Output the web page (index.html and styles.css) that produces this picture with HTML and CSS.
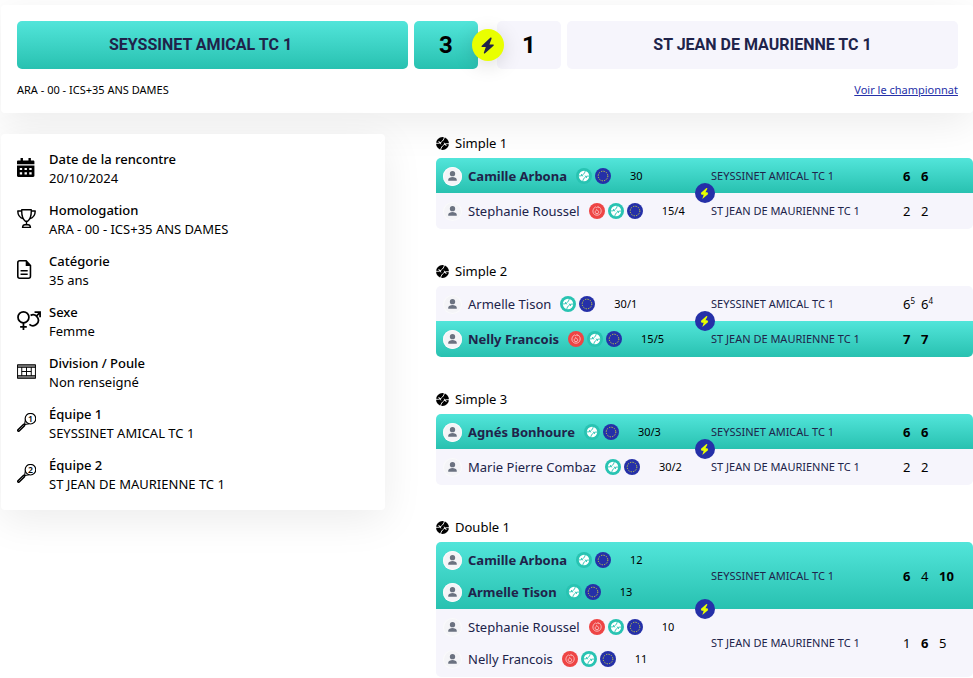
FILE: index.html
```html
<!DOCTYPE html>
<html lang="fr">
<head>
    <meta charset="UTF-8">
    <meta name="viewport" content="width=device-width, initial-scale=1.0">

    <title>Seyssinet Amical TC 1 - St Jean de Maurienne TC 1</title>
    <link rel="stylesheet" href="styles.css">
</head>
<body>
    <!-- Icônes -->
    <svg class="sprite" aria-hidden="true">
        <symbol id="bolt" viewBox="0 0 16 16">
            <path d="M10.6 0.8 2.6 8.2c-.5.5-.2 1.2.5 1.2h3.3L4.6 14.6c-.3.8.5 1.3 1.1.8l8-7.2c.5-.5.2-1.2-.5-1.2H9.8l2-5.3c.3-.9-.6-1.5-1.2-.9z"/>
        </symbol>
        <symbol id="flash" viewBox="0 0 16 16">
            <path d="M10.8 0 2.600 7.400l1.200 2.400h3L4.800 16l8.600-7.400-1.200-2.400H9.400L12.400.7z"/>
        </symbol>
        <symbol id="ball" viewBox="0 0 24 24">
            <circle cx="12" cy="12" r="12"/>
            <path class="seam" d="M0 11.500C7 13 14 8 15.500 0M8.500 24C10 16 17 11 24 12.500"/>
            <path class="seam" d="M5 7.500l4 6M15 10.500l4 6"/>
        </symbol>
        <symbol id="user" viewBox="0 0 20 20">
            <circle cx="10" cy="7" r="2.800"/>
            <path d="M5.500 14.500v-1c0-1.900 2.600-2.900 4.500-2.900s4.500 1 4.500 2.900v1z"/>
        </symbol>
        <symbol id="badge-ball" viewBox="0 0 16 16">
            <circle cx="8" cy="8" r="8" fill="#28c3b2"/>
            <circle cx="8" cy="8" r="5.200" fill="#fff"/>
            <path d="M2.800 7.800c3 .8 5.900-1.800 6.500-5.100M6.700 13.300c.6-3.300 3.500-5.900 6.500-5.100M5.200 6l1.600 2.400M9.200 7.600l1.600 2.400" fill="none" stroke="#28c3b2" stroke-width=".9"/>
        </symbol>
        <symbol id="badge-eu" viewBox="0 0 16 16">
            <circle cx="8" cy="8" r="8" fill="#2530a8"/>
            <circle cx="8" cy="8" r="4.800" fill="none" stroke="#d3da38" stroke-dasharray="1.200 1.310"/>
        </symbol>
        <symbol id="badge-fire" viewBox="0 0 16 16">
            <circle cx="8" cy="8" r="8" fill="#ee4545"/>
            <path d="M5.300 4.800 6.600 4l1 .6L9.300 3.500l.3 1.200 1.200-.2c1.100 1.300 1.700 2.900 1.200 4.700-.5 1.900-2 3-4 3s-3.600-1.200-4-3c-.4-1.700.3-3.200 1.300-4.400z" fill="none" stroke="#fbc4c4" stroke-width=".9"/>
            <path d="M6.200 9.800c-.5-1.800 1.200-1.700 1.300-3.300 1.300.8 2.300 1.800 2.200 3.300-.5 1.100-2.900 1.100-3.500 0z" fill="none" stroke="#fbc4c4" stroke-width=".9"/>
        </symbol>
        <symbol id="calendar" viewBox="0 0 24 24">
            <path fill-rule="evenodd" d="M4.500 0h3v3h7V0h3v3h3c.8 0 1.500.7 1.500 1.500V8H0V4.500C0 3.700.7 3 1.500 3h3zM0 9.500h22v13c0 .8-.7 1.500-1.500 1.500h-19C.7 24 0 23.300 0 22.500zM3.500 12.500v2.800h3v-2.800zm6 0v2.800h3v-2.800zm6 0v2.800h3v-2.800zm-12 5.500v2.800h3V18zm6 0v2.800h3V18zm6 0v2.800h3V18z"/>
        </symbol>
        <symbol id="trophy" viewBox="0 0 24 24">
            <path d="M6 1h12c.3 6-.8 11.500-4.500 14.500h-3C6.800 12.500 5.700 7 6 1zM6 2.500H1c0 5 2.500 8.500 7 10M18 2.500h5c0 5-2.500 8.500-7 10M12 15.500V20M7 23.200c.2-2.200 1.300-3.400 3-3.400h4c1.700 0 2.800 1.200 3 3.400z" fill="none" stroke="currentColor" stroke-width="1.800" stroke-linejoin="round"/>
        </symbol>
        <symbol id="file" viewBox="0 0 24 24">
            <path d="M11.500 1H3.500C2 1 1 2 1 3.500v17C1 22 2 23 3.500 23h11c1.500 0 2.500-1 2.500-2.500V7z" fill="none" stroke="currentColor" stroke-width="2"/>
            <path d="M11 1v6.500h6.500zM4.500 12.500h9v2h-9zM4.500 17h9v2h-9z"/>
        </symbol>
        <symbol id="gender" viewBox="0 0 30 24">
            <g fill="none" stroke="currentColor" stroke-width="2.200">
                <circle cx="8" cy="8" r="6.900"/>
                <path d="M8 15v9M3.800 20h8.400M17 5.500a6.800 6.800 0 1 1-1.500 11.300M24 7l4.500-5M22 1.500h7V8"/>
            </g>
        </symbol>
        <symbol id="court" viewBox="0 0 24 24">
            <path d="M0 3h24v3.500H0zM0 17.500h24V21H0z" fill="#888"/>
            <path d="M.7 3.500h22.600v17H.700zM.700 6.700h22.600M.700 17.300h22.600M6 6.500v11M12 6.500v11M18 6.500v11M6 12h12" fill="none" stroke="currentColor" stroke-width="1.200"/>
        </symbol>
        <symbol id="racket" viewBox="0 0 24 24">
            <circle cx="17" cy="7.200" r="6.700" fill="none" stroke="currentColor" stroke-width="1.500"/>
            <path d="M10.700 8.500 9.500 14.500 15.500 13.500M9.500 14.500 8 16" fill="none" stroke="currentColor" stroke-width="1.400"/>
            <path d="M8.500 15.500 2 22" fill="none" stroke="currentColor" stroke-width="4" stroke-linecap="round"/>
            <path d="M8.500 15.500 2 22" fill="none" stroke="#999" stroke-width="1"/>
        </symbol>
    </svg>

    <header class="card header">
        <div class="scoreboard">
            <h2 class="team winner">SEYSSINET AMICAL TC 1</h2>
            <div class="points">
                <div class="point winner">3</div>
                <div class="point">1</div>
                <span class="versus"><svg><use href="#bolt"/></svg></span>
            </div>
            <h2 class="team">ST JEAN DE MAURIENNE TC 1</h2>
        </div>
        <div class="header-info">
            <span>ARA - 00 - ICS+35 ANS DAMES</span>
            <a href="#">Voir le championnat</a>
        </div>
    </header>

    <main>
        <aside class="card details">
            <div class="detail">
                <svg><use href="#calendar"/></svg>
                <dl><dt>Date de la rencontre</dt><dd>20/10/2024</dd></dl>
            </div>
            <div class="detail">
                <svg><use href="#trophy"/></svg>
                <dl><dt>Homologation</dt><dd>ARA - 00 - ICS+35 ANS DAMES</dd></dl>
            </div>
            <div class="detail">
                <svg><use href="#file"/></svg>
                <dl><dt>Catégorie</dt><dd>35 ans</dd></dl>
            </div>
            <div class="detail">
                <svg class="wide"><use href="#gender"/></svg>
                <dl><dt>Sexe</dt><dd>Femme</dd></dl>
            </div>
            <div class="detail">
                <svg><use href="#court"/></svg>
                <dl><dt>Division / Poule</dt><dd>Non renseigné</dd></dl>
            </div>
            <div class="detail">
                <svg viewBox="0 0 24 24"><use href="#racket"/><text x="17" y="11">1</text></svg>
                <dl><dt>Équipe 1</dt><dd>SEYSSINET AMICAL TC 1</dd></dl>
            </div>
            <div class="detail">
                <svg viewBox="0 0 24 24"><use href="#racket"/><text x="17" y="11">2</text></svg>
                <dl><dt>Équipe 2</dt><dd>ST JEAN DE MAURIENNE TC 1</dd></dl>
            </div>
        </aside>

        <div class="matches">
            <section class="match">
                <h3><svg><use href="#ball"/></svg>Simple 1</h3>
                <div class="side winner">
                    <div class="players">
                        <div class="player">
                            <svg class="avatar"><use href="#user"/></svg>
                            <span class="name">Camille Arbona</span>
                            <span class="badges"><svg><use href="#badge-ball"/></svg><svg><use href="#badge-eu"/></svg></span>
                            <span class="rank">30</span>
                        </div>
                    </div>
                    <div class="club">SEYSSINET AMICAL TC 1</div>
                    <div class="sets"><b>6</b><b>6</b></div>
                </div>
                <div class="side">
                    <span class="versus"><svg><use href="#flash"/></svg></span>
                    <div class="players">
                        <div class="player">
                            <svg class="avatar"><use href="#user"/></svg>
                            <span class="name">Stephanie Roussel</span>
                            <span class="badges"><svg><use href="#badge-fire"/></svg><svg><use href="#badge-ball"/></svg><svg><use href="#badge-eu"/></svg></span>
                            <span class="rank">15/4</span>
                        </div>
                    </div>
                    <div class="club">ST JEAN DE MAURIENNE TC 1</div>
                    <div class="sets"><span>2</span><span>2</span></div>
                </div>
            </section>

            <section class="match">
                <h3><svg><use href="#ball"/></svg>Simple 2</h3>
                <div class="side">
                    <div class="players">
                        <div class="player">
                            <svg class="avatar"><use href="#user"/></svg>
                            <span class="name">Armelle Tison</span>
                            <span class="badges"><svg><use href="#badge-ball"/></svg><svg><use href="#badge-eu"/></svg></span>
                            <span class="rank">30/1</span>
                        </div>
                    </div>
                    <div class="club">SEYSSINET AMICAL TC 1</div>
                    <div class="sets"><span>6<sup>5</sup></span><span>6<sup>4</sup></span></div>
                </div>
                <div class="side winner">
                    <span class="versus"><svg><use href="#flash"/></svg></span>
                    <div class="players">
                        <div class="player">
                            <svg class="avatar"><use href="#user"/></svg>
                            <span class="name">Nelly Francois</span>
                            <span class="badges"><svg><use href="#badge-fire"/></svg><svg><use href="#badge-ball"/></svg><svg><use href="#badge-eu"/></svg></span>
                            <span class="rank">15/5</span>
                        </div>
                    </div>
                    <div class="club">ST JEAN DE MAURIENNE TC 1</div>
                    <div class="sets"><b>7</b><b>7</b></div>
                </div>
            </section>

            <section class="match">
                <h3><svg><use href="#ball"/></svg>Simple 3</h3>
                <div class="side winner">
                    <div class="players">
                        <div class="player">
                            <svg class="avatar"><use href="#user"/></svg>
                            <span class="name">Agnés Bonhoure</span>
                            <span class="badges"><svg><use href="#badge-ball"/></svg><svg><use href="#badge-eu"/></svg></span>
                            <span class="rank">30/3</span>
                        </div>
                    </div>
                    <div class="club">SEYSSINET AMICAL TC 1</div>
                    <div class="sets"><b>6</b><b>6</b></div>
                </div>
                <div class="side">
                    <span class="versus"><svg><use href="#flash"/></svg></span>
                    <div class="players">
                        <div class="player">
                            <svg class="avatar"><use href="#user"/></svg>
                            <span class="name">Marie Pierre Combaz</span>
                            <span class="badges"><svg><use href="#badge-ball"/></svg><svg><use href="#badge-eu"/></svg></span>
                            <span class="rank">30/2</span>
                        </div>
                    </div>
                    <div class="club">ST JEAN DE MAURIENNE TC 1</div>
                    <div class="sets"><span>2</span><span>2</span></div>
                </div>
            </section>

            <section class="match">
                <h3><svg><use href="#ball"/></svg>Double 1</h3>
                <div class="side winner">
                    <div class="players">
                        <div class="player">
                            <svg class="avatar"><use href="#user"/></svg>
                            <span class="name">Camille Arbona</span>
                            <span class="badges"><svg><use href="#badge-ball"/></svg><svg><use href="#badge-eu"/></svg></span>
                            <span class="rank">12</span>
                        </div>
                        <div class="player">
                            <svg class="avatar"><use href="#user"/></svg>
                            <span class="name">Armelle Tison</span>
                            <span class="badges"><svg><use href="#badge-ball"/></svg><svg><use href="#badge-eu"/></svg></span>
                            <span class="rank">13</span>
                        </div>
                    </div>
                    <div class="club">SEYSSINET AMICAL TC 1</div>
                    <div class="sets"><b>6</b><span>4</span><b>10</b></div>
                </div>
                <div class="side">
                    <span class="versus"><svg><use href="#flash"/></svg></span>
                    <div class="players">
                        <div class="player">
                            <svg class="avatar"><use href="#user"/></svg>
                            <span class="name">Stephanie Roussel</span>
                            <span class="badges"><svg><use href="#badge-fire"/></svg><svg><use href="#badge-ball"/></svg><svg><use href="#badge-eu"/></svg></span>
                            <span class="rank">10</span>
                        </div>
                        <div class="player">
                            <svg class="avatar"><use href="#user"/></svg>
                            <span class="name">Nelly Francois</span>
                            <span class="badges"><svg><use href="#badge-fire"/></svg><svg><use href="#badge-ball"/></svg><svg><use href="#badge-eu"/></svg></span>
                            <span class="rank">11</span>
                        </div>
                    </div>
                    <div class="club">ST JEAN DE MAURIENNE TC 1</div>
                    <div class="sets"><span>1</span><b>6</b><span>5</span></div>
                </div>
            </section>
        </div>
    </main>
</body>
</html>
```
FILE: styles.css
```css
* {
    box-sizing: border-box;
}
body {
    font-family: "Noto Sans", sans-serif;
    font-size: 13px;
    line-height: 20px;
    color: #000;
    background-color: #fff;
    margin: 0;
    padding: 5px 0 0 1px;
}
h2, h3, dl, dd {
    margin: 0;
}
svg {
    display: block;
    flex: none;
    fill: currentColor;
}
.sprite {
    position: absolute;
    width: 0;
    height: 0;
}
.card {
    background-color: #fff;
    border-radius: 4px;
    box-shadow: 0 10px 40px rgba(0, 0, 0, 0.08);
}
.winner {
    background: linear-gradient(#52e5da, #28c1b0);
}

/* Header */
.header {
    padding: 16px 15px 13px 16px;
}
.scoreboard {
    display: grid;
    grid-template-columns: 1fr auto 1fr;
    gap: 6px;
}
.team, .point {
    display: flex;
    align-items: center;
    justify-content: center;
    height: 48px;
    border-radius: 5px;
    font-family: Roboto, sans-serif;
    font-weight: 700;
}
.team {
    font-size: 16px;
    color: #20234a;
}
.team.winner {
    padding-right: 24px;
}
.team:not(.winner), .point:not(.winner) {
    background-color: #f6f5fc;
}
.points {
    position: relative;
    display: flex;
    gap: 19px;
}
.point {
    width: 64px;
    font-size: 24px;
}
.points .versus {
    position: absolute;
    top: 8px;
    left: calc(50% - 16px);
    display: grid;
    place-items: center;
    width: 32px;
    height: 32px;
    border-radius: 50%;
    color: #20234a;
    background-color: #e9ff00;
    box-shadow: 0 4px 20px rgba(0, 0, 0, 0.15);
}
.points .versus svg {
    width: 17px;
    height: 17px;
}
.header-info {
    display: flex;
    justify-content: space-between;
    margin-top: 11px;
    font-size: 11px;
}
.header-info a {
    color: #2530a8;
}

/* Body */
main {
    display: flex;
    align-items: flex-start;
    margin-top: 20px;
}
.details {
    display: flex;
    flex-direction: column;
    gap: 13px;
    width: 384px;
    margin-top: 1px;
    padding: 16px;
}
.detail {
    display: flex;
    align-items: flex-start;
    gap: 13px;
}
.detail svg {
    width: 19px;
    height: 19px;
    margin-top: 8px;
    overflow: visible;
}
.detail .wide {
    width: 24px;
    margin-right: -5px;
}
.detail text {
    font-size: 11px;
    font-weight: 600;
    text-anchor: middle;
}
dl {
    line-height: 19px;
}
dt {
    font-weight: 500;
}
.matches {
    flex: 1;
    display: flex;
    flex-direction: column;
    gap: 32px;
    margin-left: 51px;
}
.match h3 {
    display: flex;
    align-items: center;
    gap: 6px;
    margin-bottom: 5px;
    font-size: 13px;
    font-weight: 400;
}
.match h3 svg {
    width: 13px;
    height: 13px;
}
.seam {
    fill: none;
    stroke: #fff;
    stroke-width: 1.8;
}
.side {
    position: relative;
    display: flex;
    align-items: center;
    padding: 2px 0 1px 7px;
    color: #20234a;
}
.side:not(.winner) {
    background-color: #f6f5fc;
}
h3 + .side {
    border-radius: 5px 5px 0 0;
}
.side:last-child {
    padding-bottom: 2px;
    border-radius: 0 0 5px 5px;
}
.side .versus {
    position: absolute;
    top: -10px;
    left: calc(50% - 10px);
    display: grid;
    place-items: center;
    width: 20px;
    height: 20px;
    border-radius: 50%;
    color: #e9ff00;
    background-color: #2530a8;
}
.side .versus svg {
    width: 11px;
    height: 11px;
}
.players {
    width: 268px;
}
.player {
    display: flex;
    align-items: center;
    height: 32px;
}
.avatar {
    width: 19px;
    height: 19px;
    margin-right: 6px;
    border-radius: 50%;
    color: #6b7280;
    background-color: #f4f4f7;
    box-shadow: inset 0 0 0 1px #fafafc;
}
.winner .name {
    font-weight: 700;
}
.badges {
    display: flex;
    gap: 3px;
    margin: 0 19px 0 9px;
}
.badges svg {
    width: 16px;
    height: 16px;
}
.rank, .club {
    font-size: 11px;
}
.rank {
    color: #000;
}
.club {
    width: 192px;
}
.sets {
    display: flex;
    color: #000;
}
.sets > * {
    width: 18px;
    white-space: nowrap;
}
sup {
    font-size: 8px;
    line-height: 0;
}
```
